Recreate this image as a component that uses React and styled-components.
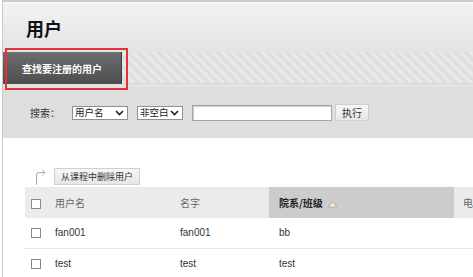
import React from "react";
import styled, { createGlobalStyle } from "styled-components";

const Global = createGlobalStyle`
  html, body { margin: 0; padding: 0; background: #fff; }
  body {
    font-family: "Liberation Sans", "Noto Sans CJK SC", sans-serif;
    color: #333;
    overflow: hidden;
  }
  * { box-sizing: border-box; }
`;

const Page = styled.div`
  margin-left: 2px;
  border-left: 1px solid #c8c8c8;
  border-top: 2px solid #cdcdc5;
  min-height: 277px;
  width: 471px;
  overflow: hidden;
`;

const Header = styled.div`
  height: 50px;
  display: flex;
  align-items: center;
  padding-left: 23px;
  background: linear-gradient(#f3f3f3, #e3e3e3);
  border-top: 1px solid #f9f9f9;
`;

const Title = styled.h1`
  margin: 0;
  font-family: "Noto Sans CJK SC", sans-serif;
  font-size: 18px;
  font-weight: 700;
  color: #111;
  line-height: 1;
`;

const TabBar = styled.div`
  position: relative;
  display: flex;
  height: 32px;
  background: #e3e3e3;
`;

const DarkTab = styled.button`
  width: 119px;
  height: 32px;
  border: none;
  border-right: 1px solid #3c3c3c;
  background: linear-gradient(#6e6e6e, #4d4d4d);
  color: #fff;
  font-family: "Noto Sans CJK SC", sans-serif;
  font-size: 10px;
  font-weight: 700;
  padding: 0;
  text-align: center;
`;

const Stripes = styled.div`
  flex: 1;
  background: repeating-linear-gradient(
    45deg,
    #e8e8e8 0px,
    #e8e8e8 3.5px,
    #dedede 3.5px,
    #dedede 7px
  );
  border-bottom: 1px solid #d8d8d8;
`;

const Highlight = styled.div`
  position: absolute;
  left: 2px;
  top: -4px;
  width: 123px;
  height: 42px;
  border: 2px solid #e5323a;
  pointer-events: none;
`;

const SearchBar = styled.div`
  height: 54px;
  display: flex;
  align-items: center;
  padding-left: 27px;
  background: #dedede;
  border-top: 3px solid #e2e2e2;
  font-family: "Noto Sans CJK SC", sans-serif;
`;

const Label = styled.span`
  font-size: 10px;
  color: #333;
  width: 42px;
  line-height: 1;
`;

const Dropdown = styled.div`
  display: flex;
  align-items: center;
  justify-content: space-between;
  width: ${(p) => p.$w}px;
  height: 14px;
  margin-right: 9px;
  padding: 0 3px 0 2px;
  border: 1px solid #8f8f8f;
  background: #fff;
  font-size: 9.5px;
  line-height: 1;
  color: #222;
`;

const TextInput = styled.input`
  width: 140px;
  height: 16px;
  border: 1px solid #a5a5a5;
  box-shadow: inset 1px 1px 1px #ccc;
  background: #fff;
  margin-right: 3px;
  padding: 0;
`;

const SmallButton = styled.button`
  height: 17px;
  padding: 0 ${(p) => p.$px}px;
  border: 1px solid #cfcfcf;
  background: linear-gradient(#f7f7f7, #e6e6e6);
  font-family: "Noto Sans CJK SC", sans-serif;
  font-size: ${(p) => p.$fs}px;
  color: #333;
  line-height: 15px;
`;

const ActionRow = styled.div`
  display: flex;
  align-items: flex-end;
  gap: 7px;
  margin-top: 29px;
  padding-left: 30px;
  height: 18px;
`;

const Table = styled.table`
  margin-left: 22px;
  margin-top: 2px;
  border-collapse: collapse;
  table-layout: fixed;
  width: 520px;
  font-size: 10px;
`;

const Th = styled.th`
  height: 31px;
  text-align: left;
  padding: 0 0 0 ${(p) => p.$pl ?? 10}px;
  font-family: "Noto Sans CJK SC", sans-serif;
  font-weight: ${(p) => (p.$sorted ? 700 : 400)};
  color: ${(p) => (p.$sorted ? "#222" : "#666")};
  background: ${(p) => (p.$sorted ? "#cccccc" : "#ebebeb")};
  font-size: 10px;
  white-space: nowrap;
`;

const Td = styled.td`
  height: 30px;
  padding: 0 0 0 ${(p) => p.$pl ?? 10}px;
  font-family: "Liberation Sans", "Noto Sans CJK SC", sans-serif;
  color: #333;
  font-size: 10px;
  border-bottom: 1px solid ${(p) => (p.$line ? "#e6e6e6" : "transparent")};
`;

const Box = styled.span`
  display: inline-block;
  width: 10px;
  height: 10px;
  border: 1px solid #8a8a8a;
  background: #fff;
  vertical-align: middle;
`;

const SortIcon = () => (
  <svg width="11" height="7" viewBox="0 0 11 7" style={{ marginLeft: 4, verticalAlign: "middle" }}>
    <polygon points="1,6 5.5,1 10,6" fill="#f4eedc" stroke="#b9b2a2" strokeWidth="1" />
  </svg>
);

const ChevronIcon = () => (
  <svg width="9" height="6" viewBox="0 0 9 6">
    <polyline points="1,1 4.5,4.5 8,1" fill="none" stroke="#222" strokeWidth="1.6" />
  </svg>
);

const rows = [
  { user: "fan001", name: "fan001", dept: "bb" },
  { user: "test", name: "test", dept: "test" },
];

export default function App() {
  return (
    <>
      <Global />
      <Page>
        <Header>
          <Title>用户</Title>
        </Header>
        <TabBar>
          <DarkTab>查找要注册的用户</DarkTab>
          <Stripes />
          <Highlight />
        </TabBar>
        <SearchBar>
          <Label>搜索：</Label>
          <Dropdown $w={56}>
            <span>用户名</span>
            <ChevronIcon />
          </Dropdown>
          <Dropdown $w={46}>
            <span>非空白</span>
            <ChevronIcon />
          </Dropdown>
          <TextInput type="text" />
          <SmallButton $px={6} $fs={10}>执行</SmallButton>
        </SearchBar>
        <ActionRow>
          <svg width="14" height="19" viewBox="0 0 14 19">
            <path d="M3.5 19 V9 Q3.5 6.5 6 6.5 H12" fill="none" stroke="#aaa" strokeWidth="1" />
            <path d="M9 3.5 L12 6.5 L9 9.5" fill="none" stroke="#aaa" strokeWidth="1" />
          </svg>
          <SmallButton $px={6} $fs={9}>从课程中删除用户</SmallButton>
        </ActionRow>
        <Table>
          <colgroup>
            <col style={{ width: 20 }} />
            <col style={{ width: 125 }} />
            <col style={{ width: 99 }} />
            <col style={{ width: 185 }} />
            <col style={{ width: 91 }} />
          </colgroup>
          <thead>
            <tr>
              <Th $pl={6}><Box /></Th>
              <Th>用户名</Th>
              <Th>名字</Th>
              <Th $sorted>院系/班级<SortIcon /></Th>
              <Th $pl={9}>电子邮件</Th>
            </tr>
          </thead>
          <tbody>
            {rows.map((r, i) => (
              <tr key={r.user}>
                <Td $pl={6} $line={i === 0}><Box /></Td>
                <Td $line={i === 0}>{r.user}</Td>
                <Td $line={i === 0}>{r.name}</Td>
                <Td $line={i === 0}>{r.dept}</Td>
                <Td $line={i === 0} />
              </tr>
            ))}
          </tbody>
        </Table>
      </Page>
    </>
  );
}
